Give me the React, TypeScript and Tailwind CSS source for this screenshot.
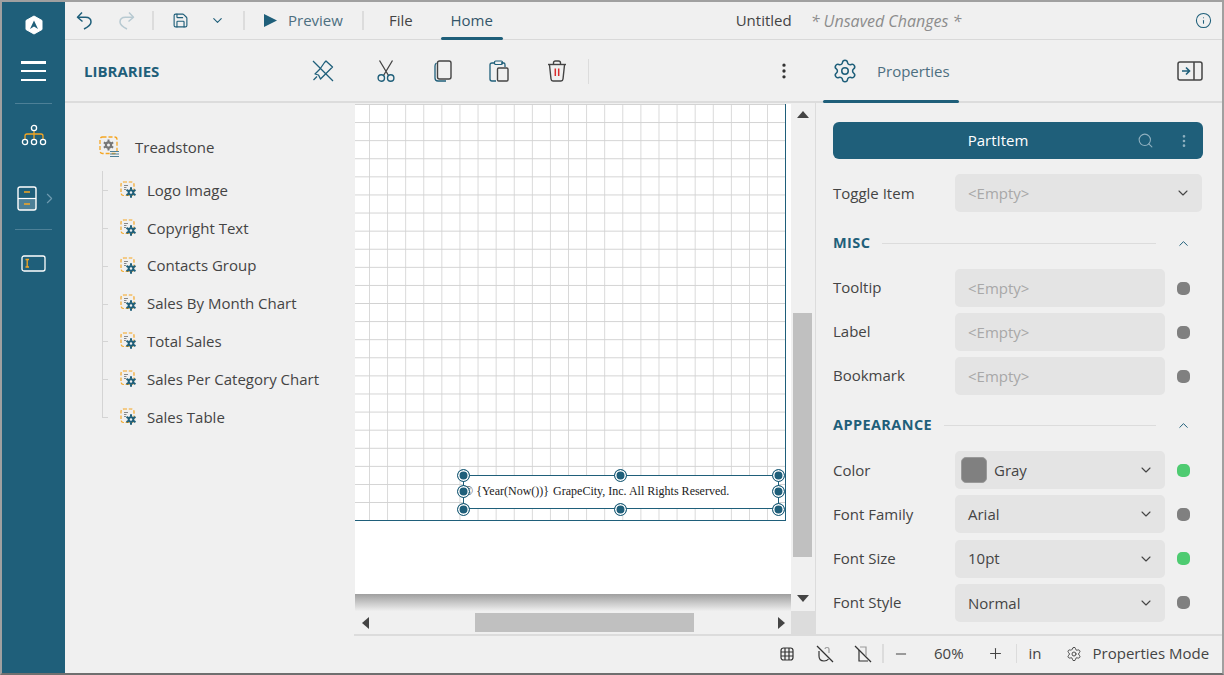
import React from "react";
import { ChevronDown, ChevronRight, ChevronUp, Info, MoreVertical, Search, Settings, Minus, Plus, Save } from "lucide-react";

const Divider = ({ className = "" }: { className?: string }) => <div className={"w-[2px] bg-[#dcdcdc] " + className} />;

function Logo() {
  return (
    <svg width="18" height="20" viewBox="0 0 18 20">
      <path d="M9 1 L17 5.5 V14.5 L9 19 L1 14.5 V5.5 Z" fill="#fff" stroke="#fff" strokeLinejoin="round" />
      <path d="M9 5.5 L5 14 L9 11.5 L13 14 Z" fill="#1f5f7a" />
    </svg>
  );
}

function UndoIcon({ color, flip }: { color: string; flip?: boolean }) {
  return (
    <svg className={flip ? "-scale-x-100" : ""} width="16" height="19" viewBox="0 0 16 19" fill="none" stroke={color} strokeWidth="1.5" strokeLinejoin="round">
      <path d="M6 1.5 L1.5 6.2 L6.5 10.5" />
      <path d="M2 6.2 H9.5 Q15 6.2 15 11 Q15 14.5 8 18" />
    </svg>
  );
}

function OrgIcon() {
  return (
    <svg width="26" height="22" viewBox="0 0 26 22" fill="none">
      <path d="M13 7 V15 M4 15 V12 Q4 10 6 10 H20 Q22 10 22 12 V15" stroke="#f5a623" strokeWidth="1.3" />
      <circle cx="13" cy="4" r="2.6" stroke="#fff" strokeWidth="1.3" />
      <circle cx="4" cy="18" r="2.6" stroke="#fff" strokeWidth="1.3" />
      <circle cx="13" cy="18" r="2.6" stroke="#fff" strokeWidth="1.3" />
      <circle cx="22" cy="18" r="2.6" stroke="#fff" strokeWidth="1.3" />
    </svg>
  );
}

function CabinetIcon() {
  return (
    <svg width="20" height="25" viewBox="0 0 20 25" fill="none">
      <rect x="1" y="12.5" width="18" height="11.5" fill="#4d8097" />
      <rect x="1" y="1" width="18" height="23" rx="2" stroke="#fff" strokeWidth="1.4" />
      <path d="M1 12.5 H19" stroke="#fff" strokeWidth="1.2" />
      <path d="M7 6 H13 M7 18 H13" stroke="#f5a623" strokeWidth="1.4" />
    </svg>
  );
}

function FieldIcon() {
  return (
    <svg width="25" height="17" viewBox="0 0 25 17" fill="none">
      <rect x="1" y="1" width="23" height="15" rx="2" stroke="#fff" strokeWidth="1.3" />
      <path d="M4.5 4.5 H8 M6.2 4.5 V12 M4.5 12 H8" stroke="#f5a623" strokeWidth="1.3" />
    </svg>
  );
}

function PinOffIcon() {
  return (
    <svg width="22" height="22" viewBox="0 0 22 22" fill="none" stroke="#1f5f7a" strokeWidth="1.3">
      <path d="M12.5 2.5 L14 1 L20.5 7 L19 8.5 L14.5 13 L8.5 19 L6.5 15 L3 14 L8 9 Z" strokeLinejoin="round" />
      <path d="M1 1 L21 21" />
      <path d="M5 16.5 L1.5 20" />
    </svg>
  );
}

function ScissorsIcon() {
  return (
    <svg width="18" height="22" viewBox="0 0 18 22" fill="none">
      <path d="M2.5 0.5 L11.5 15.5 M15.5 0.5 L6.5 15.5" stroke="#444" strokeWidth="1.3" />
      <circle cx="4.3" cy="18" r="3.2" stroke="#1f5f7a" strokeWidth="1.4" />
      <circle cx="13.7" cy="18" r="3.2" stroke="#1f5f7a" strokeWidth="1.4" />
    </svg>
  );
}

function CopyIcon() {
  return (
    <svg width="18" height="22" viewBox="0 0 18 22" fill="none">
      <path d="M2.5 3 Q1 4 1 6 V18 Q1 21 4 21 H12" stroke="#1f5f7a" strokeWidth="1.3" />
      <rect x="3.5" y="1" width="13.5" height="18" rx="2" stroke="#444" strokeWidth="1.4" />
    </svg>
  );
}

function PasteIcon() {
  return (
    <svg width="20" height="22" viewBox="0 0 20 22" fill="none">
      <path d="M6 3 H3 Q1 3 1 5 V19 Q1 21 3 21 H7" stroke="#1f5f7a" strokeWidth="1.3" />
      <path d="M12 3 H15 Q16 3 16 5 V7" stroke="#1f5f7a" strokeWidth="1.3" />
      <rect x="5.5" y="1" width="8" height="3.5" rx="1.2" stroke="#1f5f7a" strokeWidth="1.2" />
      <rect x="8.5" y="8" width="10.5" height="13" rx="1.2" stroke="#444" strokeWidth="1.4" />
    </svg>
  );
}

function TrashIcon() {
  return (
    <svg width="20" height="22" viewBox="0 0 20 22" fill="none" stroke="#444" strokeWidth="1.4">
      <path d="M1 4.5 H19" />
      <path d="M6.5 4 V3 Q6.5 1 8.5 1 H11.5 Q13.5 1 13.5 3 V4" />
      <path d="M2.5 5 L4 19 Q4.2 21 6 21 H14 Q15.8 21 16 19 L17.5 5" />
      <path d="M8.3 8.5 V16 M11.7 8.5 V16" stroke="#d92c2c" strokeWidth="1.5" />
    </svg>
  );
}

function CollapseIcon() {
  return (
    <svg width="26" height="20" viewBox="0 0 26 20" fill="none">
      <rect x="1" y="1" width="24" height="18" rx="2" stroke="#444" strokeWidth="1.5" />
      <path d="M17 1 V19" stroke="#444" strokeWidth="1.5" />
      <path d="M5 10 H12 M9 6.5 L12.5 10 L9 13.5" stroke="#1f5f7a" strokeWidth="1.6" />
    </svg>
  );
}

const gearSpokes = (cx: number, cy: number, r: number) => {
  const parts: string[] = [];
  for (let i = 0; i < 6; i++) {
    const a = (i * Math.PI) / 3 + Math.PI / 6;
    parts.push(`M${(cx + Math.cos(a) * r * 0.55).toFixed(2)} ${(cy + Math.sin(a) * r * 0.55).toFixed(2)} L${(cx + Math.cos(a) * r).toFixed(2)} ${(cy + Math.sin(a) * r).toFixed(2)}`);
  }
  return parts.join(" ");
};

function LibraryIcon() {
  return (
    <svg width="22" height="22" viewBox="0 0 22 22" fill="none">
      <rect x="1" y="1" width="17" height="16.5" rx="2.5" stroke="#f5a623" strokeWidth="1.3" strokeDasharray="4 2" />
      <circle cx="9.5" cy="9" r="2.6" stroke="#777" strokeWidth="2.2" />
      <path d={gearSpokes(9.5, 9, 5.4)} stroke="#777" strokeWidth="2" />
      <path d="M11 15.5 H20 M11 18 H20 M11 20.5 H20" stroke="#4d8097" strokeWidth="1.2" />
    </svg>
  );
}

function ItemIcon() {
  return (
    <svg width="18" height="18" viewBox="0 0 18 18" fill="none">
      <rect x="1" y="1" width="13" height="13.5" rx="2.5" stroke="#f5a623" strokeWidth="1.2" strokeDasharray="3.5 1.8" />
      <path d="M4 4.5 H8 M4 6.5 H6.5 M4 8.5 H6" stroke="#888" strokeWidth="1" />
      <circle cx="11" cy="11.5" r="2.3" stroke="#1f5f7a" strokeWidth="2" />
      <path d={gearSpokes(11, 11.5, 5.2)} stroke="#1f5f7a" strokeWidth="2" />
    </svg>
  );
}

function GridIcon() {
  return (
    <svg width="14" height="14" viewBox="0 0 14 14" fill="none" stroke="#333" strokeWidth="1.2">
      <rect x="1" y="1" width="12" height="12" rx="2.5" />
      <path d="M5 1 V13 M9 1 V13 M1 5 H13 M1 9 H13" />
    </svg>
  );
}

function NoMagnetIcon() {
  return (
    <svg width="18" height="18" viewBox="0 0 18 18" fill="none" stroke="#333" strokeWidth="1.2">
      <path d="M1 1 L17 17" />
      <path d="M3 6 V11 Q3 16 8 16 Q11 16 12.5 14" />
      <path d="M9 4 Q9 2.5 11 2.5 Q13 2.5 13 4 V8" stroke="#999" />
    </svg>
  );
}

function NoRulerIcon() {
  return (
    <svg width="18" height="18" viewBox="0 0 18 18" fill="none" stroke="#333" strokeWidth="1.2">
      <path d="M1 1 L17 17" />
      <path d="M5 5 V16 H14" />
      <path d="M6 2 H12 V11" stroke="#999" />
    </svg>
  );
}

const tree = ["Logo Image", "Copyright Text", "Contacts Group", "Sales By Month Chart", "Total Sales", "Sales Per Category Chart", "Sales Table"];

function Handle({ className }: { className: string }) {
  return <div className={"absolute w-[13px] h-[13px] rounded-full bg-[#1f5f7a] border border-[#1f5f7a] shadow-[inset_0_0_0_1.5px_#ffffff] " + className} />;
}

function SectionHeader({ title, lineClass }: { title: string; lineClass: string }) {
  return (
    <div className="flex items-center h-[20px]">
      <span className="text-[14.5px] font-bold text-[#1f5f7a] tracking-[0.4px]">{title}</span>
      <div className={"h-px bg-[#dcdcdc] " + lineClass} />
      <ChevronUp className="ml-auto mr-[31px]" size={15} color="#1f5f7a" strokeWidth={1.6} />
    </div>
  );
}

function Row({ label, value, select, empty, dot, swatch, labelClass = "" }: { label: string; value: string; select?: boolean; empty?: boolean; dot?: string; swatch?: boolean; labelClass?: string }) {
  return (
    <div className="flex items-center h-[38px]">
      <span className={"w-[122px] text-[15px] text-[#444] " + labelClass}>{label}</span>
      <div className="w-[210px] h-[38px] rounded-[5px] bg-[#e4e4e4] flex items-center pl-[13px] pr-[11px]">
        {swatch && <div className="w-[26px] h-[26px] -ml-[7px] mr-[7px] rounded-[5px] bg-[#808080] border border-[#999]" />}
        <span className={"text-[15px] " + (empty ? "text-[#a8a8a8]" : "text-[#444]")}>{value}</span>
        {select && <ChevronDown className="ml-auto" size={16} color="#444" strokeWidth={1.6} />}
      </div>
      <div className={"ml-[12px] w-[13px] h-[13px] rounded-[5px] " + (dot ?? "bg-[#808080]")} />
    </div>
  );
}

export default function App() {
  return (
    <div className="w-[1224px] h-[675px] overflow-hidden flex border-2 border-[#a0a0a0] border-b-[#6f6f6f] bg-[#f0f0f0] font-['Open_Sans',sans-serif] text-[#444]">
      {/* Sidebar */}
      <aside className="w-[63px] shrink-0 bg-[#1f5f7a] flex flex-col items-center">
        <div className="h-[44px] flex items-center justify-center mt-[1px]"><Logo /></div>
        <div className="mt-[14px] w-[25px] h-[20px] flex flex-col justify-between">
          <div className="h-[2.5px] bg-white" />
          <div className="h-[2.5px] bg-white" />
          <div className="h-[2.5px] bg-white" />
        </div>
        <div className="mt-[22px] w-[37px] h-px bg-[#4d8097]" />
        <div className="mt-[20px]"><OrgIcon /></div>
        <div className="mt-[40px] relative flex items-center -ml-[13px]">
          <CabinetIcon />
          <ChevronRight className="absolute left-[24px]" size={17} color="#6f9bb0" strokeWidth={1.6} />
        </div>
        <div className="mt-[18px] w-[37px] h-px bg-[#4d8097]" />
        <div className="mt-[25px]"><FieldIcon /></div>
      </aside>

      <div className="flex-1 flex flex-col min-w-0">
        {/* Top bar */}
        <header className="h-[38px] shrink-0 border-b border-[#d9d9d9] flex items-center relative text-[15px]">
          <div className="ml-[11px]"><UndoIcon color="#1f5f7a" /></div>
          <div className="ml-[27px]"><UndoIcon color="#b7c9d1" flip /></div>
          <Divider className="ml-[17px] h-[19px]" />
          <Save className="ml-[18px]" size={17} color="#1f5f7a" strokeWidth={1.6} />
          <ChevronDown className="ml-[21px]" size={15} color="#1f5f7a" strokeWidth={1.8} />
          <Divider className="ml-[18px] h-[19px]" />
          <svg className="ml-[18px]" width="15" height="15" viewBox="0 0 15 15"><path d="M1 1 L14 7.5 L1 14 Z" fill="#1f5f7a" /></svg>
          <span className="ml-[10px] text-[#4d6f80]">Preview</span>
          <Divider className="ml-[19px] h-[19px]" />
          <span className="ml-[25px] text-[#444]">File</span>
          <div className="ml-[28px] w-[62px] self-stretch relative flex items-center justify-center">
            <span className="text-[#33566a]">Home</span>
            <div className="absolute left-0 right-0 bottom-[-1px] h-[3px] rounded-sm bg-[#1f5f7a]" />
          </div>
          <span className="ml-[233px] text-[#444]">Untitled</span>
          <span className="ml-[19px] italic text-[16px] text-[#8c8c8c]">* Unsaved Changes *</span>
          <Info className="ml-auto mr-[10px]" size={17} color="#1f5f7a" strokeWidth={1.5} />
        </header>

        {/* Tool row */}
        <div className="h-[63px] shrink-0 border-b-2 border-[#dcdcdc] flex items-center pt-[1px]">
          <span className="ml-[19px] w-[228px] text-[15px] font-bold text-[#1f5f7a]">LIBRARIES</span>
          <PinOffIcon />
          <div className="ml-[43px]"><ScissorsIcon /></div>
          <div className="ml-[39px]"><CopyIcon /></div>
          <div className="ml-[37px]"><PasteIcon /></div>
          <div className="ml-[38px]"><TrashIcon /></div>
          <Divider className="ml-[21px] h-[25px] w-px" />
          <MoreVertical className="ml-[185px]" size={20} color="#333" strokeWidth={2} />
          <div className="ml-[29px] w-[136px] self-stretch relative flex items-center pl-[9px]">
            <Settings size={26} color="#1f5f7a" strokeWidth={1.4} />
            <span className="ml-[19px] text-[15px] text-[#4d6f80]">Properties</span>
            <div className="absolute left-0 right-0 bottom-[-2px] h-[3px] rounded-sm bg-[#1f5f7a]" />
          </div>
          <div className="ml-auto mr-[19px]"><CollapseIcon /></div>
        </div>

        <div className="flex-1 flex min-h-0">
          <div className="flex-1 flex flex-col min-w-0">
            <div className="flex-1 flex min-h-0">
              {/* Library tree */}
              <div className="w-[289px] shrink-0 pl-[34px] pt-[32px]">
                <div className="flex items-center h-[24px]">
                  <LibraryIcon />
                  <span className="ml-[14px] text-[15px] text-[#444]">Treadstone</span>
                </div>
                <div className="mt-[12px] ml-[3px] border-l border-[#d4d4d4] pb-[2px] h-[247px]">
                  {tree.map((t) => (
                    <div key={t} className="h-[37.85px] flex items-center relative pl-[17px]">
                      <div className="absolute left-0 top-[19px] w-[5px] h-px bg-[#d4d4d4]" />
                      <ItemIcon />
                      <span className="ml-[9px] text-[15px] text-[#444]">{t}</span>
                    </div>
                  ))}
                </div>
              </div>

              {/* Canvas */}
              <div className="flex-1 flex flex-col min-w-0">
                <div className="flex-1 flex min-h-0">
                  <div className="w-[436px] shrink-0 flex flex-col bg-white ml-px">
                    <div className="h-px bg-[#f0f0f0]" />
                    <div className="h-[417px] w-[431px] relative border-r border-b border-[#1f5f7a] bg-white bg-[linear-gradient(#d2d2d2_1px,transparent_1px),linear-gradient(90deg,#d8d8d8_1px,transparent_1px)] bg-[size:18.1px_18.1px] bg-[position:0_0,14px_0]">
                      <div className="absolute left-[108px] top-[371px] w-[315px] h-[34px] bg-white border-y border-[#1f5f7a] flex items-center pl-[1px] pb-[2px] whitespace-nowrap font-['Liberation_Serif',serif] text-[12px] text-[#222]">
                        <span>© {"{Year(Now())}"}</span>
                        <span className="ml-[4px]">GrapeCity, Inc. All Rights Reserved.</span>
                      </div>
                      <div className="absolute left-[108px] top-[371px] w-px h-[34px] bg-[#1f5f7a]" />
                      <div className="absolute left-[423px] top-[371px] w-px h-[34px] bg-[#1f5f7a]" />
                      <Handle className="left-[102px] top-[365px]" />
                      <Handle className="left-[259px] top-[365px]" />
                      <Handle className="left-[417px] top-[365px]" />
                      <Handle className="left-[102px] top-[381px]" />
                      <Handle className="left-[417px] top-[381px]" />
                      <Handle className="left-[102px] top-[399px]" />
                      <Handle className="left-[259px] top-[399px]" />
                      <Handle className="left-[417px] top-[399px]" />
                    </div>
                    <div className="flex-1" />
                    <div className="h-[17px] bg-[linear-gradient(#9f9f9f,#efefef)]" />
                  </div>
                  {/* vertical scrollbar */}
                  <div className="w-[24px] shrink-0 flex flex-col items-center pt-[7px] pb-[9px] relative">
                    <div className="w-0 h-0 border-x-[6px] border-x-transparent border-b-[7px] border-b-[#444] mt-[1px]" />
                    <div className="w-[19px] h-[244px] bg-[#c0c0c0] mt-[195px] -ml-[1px]" />
                    <div className="w-0 h-0 border-x-[6px] border-x-transparent border-t-[7px] border-t-[#444] mt-auto" />
                  </div>
                </div>
                {/* horizontal scrollbar */}
                <div className="h-[23px] shrink-0 flex items-center">
                  <div className="w-[436px] ml-px flex items-center pl-[7px] pr-[5px]">
                    <div className="w-0 h-0 border-y-[6px] border-y-transparent border-r-[7px] border-r-[#444]" />
                    <div className="w-[219px] h-[19px] bg-[#c0c0c0] ml-[106px]" />
                    <div className="w-0 h-0 border-y-[6px] border-y-transparent border-l-[7px] border-l-[#444] ml-auto mr-[1px]" />
                  </div>
                  <div className="w-[24px] self-stretch bg-[#dcdcdc]" />
                </div>
              </div>
            </div>
          </div>

          {/* Properties */}
          <div className="w-[407px] shrink-0 border-l border-[#dcdcdc] pl-[17px] pt-[19px]">
            <div className="w-[370px] h-[37px] rounded-[6px] bg-[#1f5f7a] flex items-center relative">
              <span className="w-full text-center text-[15px] text-white font-medium pr-[40px]">PartItem</span>
              <Search className="absolute left-[304px]" size={17} color="#8fb0bf" strokeWidth={1.5} />
              <MoreVertical className="absolute left-[343px]" size={16} color="#8fb0bf" strokeWidth={2} />
            </div>
            <div className="mt-[15px] flex items-center h-[38px]">
              <span className="w-[122px] text-[15px] text-[#444]">Toggle Item</span>
              <div className="w-[247px] h-[38px] rounded-[5px] bg-[#e4e4e4] flex items-center pl-[13px] pr-[11px]">
                <span className="text-[15px] text-[#a8a8a8]">&lt;Empty&gt;</span>
                <ChevronDown className="ml-auto" size={16} color="#444" strokeWidth={1.6} />
              </div>
            </div>
            <div className="mt-[21px]"><SectionHeader title="MISC" lineClass="ml-[12px] w-[274px]" /></div>
            <div className="mt-[16px] flex flex-col gap-[6px]">
              <Row label="Tooltip" value="<Empty>" empty labelClass="pb-[2px]" />
              <Row label="Label" value="<Empty>" empty labelClass="pb-[2px]" />
              <Row label="Bookmark" value="<Empty>" empty labelClass="pb-[2px]" />
            </div>
            <div className="mt-[20px]"><SectionHeader title="APPEARANCE" lineClass="ml-[12px] w-[212px]" /></div>
            <div className="mt-[16px] flex flex-col gap-[6.3px]">
              <Row label="Color" value="Gray" select dot="bg-[#4ecb71]" swatch />
              <Row label="Font Family" value="Arial" select />
              <Row label="Font Size" value="10pt" select dot="bg-[#4ecb71]" />
              <Row label="Font Style" value="Normal" select labelClass="pb-[2px]" />
            </div>
          </div>
        </div>

        {/* Status bar */}
        <footer className="h-[39px] shrink-0 ml-[289px] border-t-2 border-[#dcdcdc] flex items-center pb-[2px] text-[15px] text-[#444]">
          <div className="ml-[426px]"><GridIcon /></div>
          <div className="ml-[22px]"><NoMagnetIcon /></div>
          <div className="ml-[20px]"><NoRulerIcon /></div>
          <Divider className="ml-[10px] h-[19px]" />
          <Minus className="ml-[9px]" size={16} color="#444" strokeWidth={1.5} />
          <span className="ml-[25px]">60%</span>
          <Plus className="ml-[23px]" size={17} color="#444" strokeWidth={1.5} />
          <Divider className="ml-[12px] h-[19px] w-px" />
          <span className="ml-[12px]">in</span>
          <Settings className="ml-[24px]" size={16} color="#444" strokeWidth={1.4} />
          <span className="ml-[11px]">Properties Mode</span>
        </footer>
      </div>
    </div>
  );
}
